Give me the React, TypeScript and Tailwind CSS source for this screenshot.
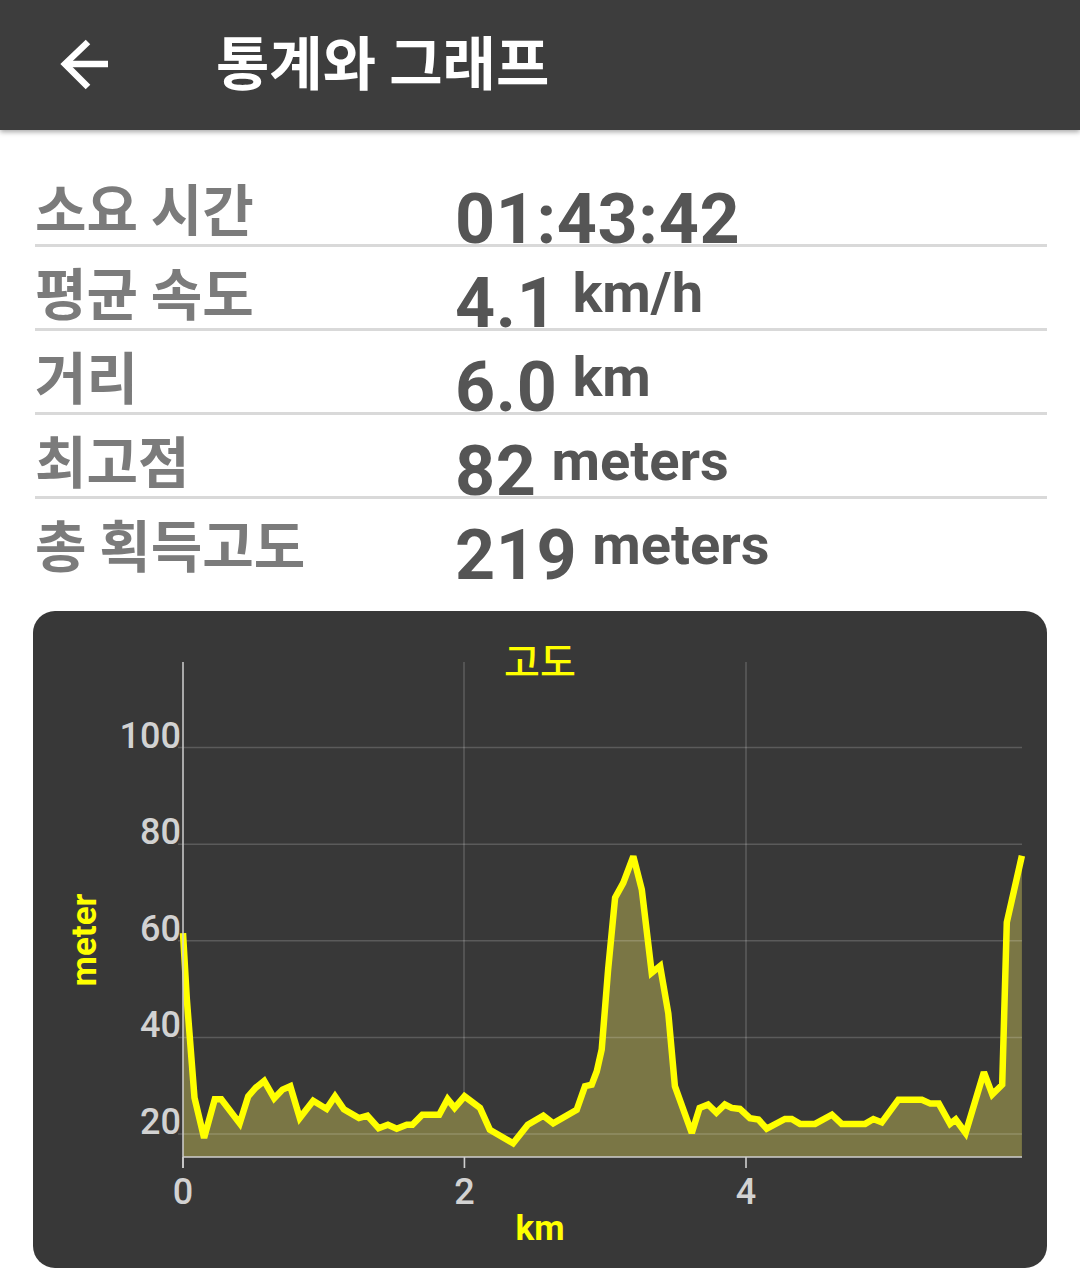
import { ReactNode } from 'react'

const ELEVATION: [number, number][] = [
  [0, 61.6], [0.027, 48], [0.082, 27.5], [0.15, 19.2], [0.226, 27.2], [0.272, 27.2],
  [0.403, 22.2], [0.463, 27.8], [0.517, 29.6], [0.577, 31.0], [0.648, 27.4], [0.707, 29.2],
  [0.762, 29.9], [0.83, 23.3], [0.925, 26.9], [1.02, 25.2], [1.08, 27.8], [1.143, 25.1],
  [1.25, 23.3], [1.31, 23.8], [1.39, 21.2], [1.456, 21.9], [1.518, 21.1], [1.59, 21.9],
  [1.63, 21.9], [1.7, 24.0], [1.82, 24.0], [1.88, 27.2], [1.93, 25.4], [2.0, 27.8],
  [2.11, 25.4], [2.18, 20.9], [2.345, 18.1], [2.45, 21.9], [2.56, 23.8], [2.63, 22.2],
  [2.797, 25.0], [2.856, 29.9], [2.904, 30.2], [2.94, 33.0], [2.975, 37.5], [3.02, 54.0],
  [3.07, 68.9], [3.128, 72.0], [3.199, 77.5], [3.26, 70.6], [3.33, 53.4], [3.39, 54.8],
  [3.448, 45.0], [3.495, 29.9], [3.615, 20.2], [3.67, 25.4], [3.73, 26.1], [3.79, 24.4],
  [3.85, 26.1], [3.898, 25.4], [3.957, 25.2], [4.028, 23.3], [4.088, 23.0], [4.147, 21.1],
  [4.277, 23.1], [4.325, 23.1], [4.384, 22.1], [4.49, 22.1], [4.61, 24.0], [4.68, 22.1],
  [4.846, 22.1], [4.905, 23.1], [4.965, 22.4], [5.083, 27.1], [5.25, 27.1], [5.31, 26.3],
  [5.37, 26.3], [5.45, 22.1], [5.49, 23.0], [5.56, 20.2], [5.69, 32.8], [5.75, 28.2],
  [5.82, 30.2], [5.853, 63.8], [5.96, 77.6],
]

// 차트 좌표 (페이지 픽셀 기준)
const px = (km: number) => 183 + km * 140.75
const py = (m: number) => 1134 - (m - 20) * 4.83
const BASE_Y = 1157

function StatRow({ label, value, unit, last }: { label: string; value: string; unit?: string; last?: boolean }) {
  return (
    <div className={last ? 'flex h-[84px]' : 'flex h-[84px] border-b-[3px] border-[#d9d9d9]'}>
      <div className="w-[420px] pt-[16px] font-['Noto_Sans_CJK_KR',sans-serif] text-[56px] font-bold leading-none text-[#7b7b7b]">
        {label}
      </div>
      <div className="flex items-start font-['Roboto',sans-serif] font-bold text-[#555555]">
        <span className="pt-[21px] text-[70px] leading-none tracking-[0.6px]">{value}</span>
        {unit && <span className="ml-[15px] pt-[18px] text-[56px] leading-none">{unit}</span>}
      </div>
    </div>
  )
}

function ElevationChart() {
  const pts = ELEVATION.map(([k, m]) => `${px(k).toFixed(1)},${py(m).toFixed(1)}`).join(' ')
  const lastX = px(ELEVATION[ELEVATION.length - 1][0]).toFixed(1)
  const area = `183,${BASE_Y} ${pts} ${lastX},${BASE_Y}`
  const yTicks = [20, 40, 60, 80, 100]
  const xTicks = [0, 2, 4]

  return (
    <svg width="1014" height="657" viewBox="33 611 1014 657" className="block">
      <text x="540" y="676" textAnchor="middle" fontSize="39" fontWeight="500" fill="#ffff00" fontFamily="'Noto Sans CJK KR', sans-serif">
        고도
      </text>

      {/* 세로 격자 */}
      {[464, 746].map((x) => (
        <line key={x} x1={x} y1={662} x2={x} y2={1168} stroke="#5c5c5c" strokeWidth="1.5" />
      ))}

      <polygon points={area} fill="#7a7645" />

      {/* 가로 격자 */}
      {yTicks.map((v) => (
        <g key={v}>
          <line x1={178} y1={py(v)} x2={1022} y2={py(v)} stroke="rgba(255,255,255,0.18)" strokeWidth="1.5" />
          <text x="181" y={py(v)} textAnchor="end" fontSize="36" fontWeight="500" fill="#d2d2d2" fontFamily="Roboto, sans-serif">
            {v}
          </text>
        </g>
      ))}

      <polyline points={pts} fill="none" stroke="#ffff00" strokeWidth="6.5" strokeLinejoin="miter" strokeMiterlimit="3" />

      {/* 축 */}
      <line x1={183} y1={662} x2={183} y2={1168} stroke="#cfcfcf" strokeWidth="1.5" />
      <line x1={183} y1={BASE_Y} x2={1022} y2={BASE_Y} stroke="#cfcfcf" strokeWidth="1.5" />
      {xTicks.map((k) => (
        <g key={k}>
          <line x1={px(k)} y1={BASE_Y} x2={px(k)} y2={1168} stroke="#cfcfcf" strokeWidth="1.5" />
          <text x={px(k)} y="1204" textAnchor="middle" fontSize="36" fontWeight="500" fill="#d2d2d2" fontFamily="Roboto, sans-serif">
            {k}
          </text>
        </g>
      ))}

      <text x="540" y="1240" textAnchor="middle" fontSize="35" fontWeight="700" fill="#ffff00" fontFamily="Roboto, sans-serif">
        km
      </text>
      <text
        x="0"
        y="0"
        transform="translate(96 940) rotate(-90)"
        textAnchor="middle"
        fontSize="35"
        fontWeight="700"
        fill="#ffff00"
        fontFamily="Roboto, sans-serif"
      >
        meter
      </text>
    </svg>
  )
}

function Header({ children }: { children: ReactNode }) {
  return (
    <div className="relative z-10 flex h-[130px] items-center bg-[#3d3d3d] shadow-[0_2px_5px_rgba(0,0,0,0.35)]">
      <svg width="60" height="60" viewBox="0 0 60 60" className="ml-[55px] shrink-0">
        <path d="M10 29H53" stroke="#ffffff" strokeWidth="6.5" fill="none" />
        <path d="M33 7L10 29L33 52" stroke="#ffffff" strokeWidth="6.5" fill="none" strokeLinejoin="miter" />
      </svg>
      <h1 className="ml-[101px] pb-[10px] font-['Noto_Sans_CJK_KR',sans-serif] text-[58px] font-bold leading-none text-white">
        {children}
      </h1>
    </div>
  )
}

export default function App() {
  return (
    <div className="h-[1269px] w-[1080px] overflow-hidden bg-white">
      <Header>통계와 그래프</Header>

      <div className="mt-[33px] pl-[35px] pr-[33px]">
        <StatRow label="소요 시간" value="01:43:42" />
        <StatRow label="평균 속도" value="4.1" unit="km/h" />
        <StatRow label="거리" value="6.0" unit="km" />
        <StatRow label="최고점" value="82" unit="meters" />
        <StatRow label="총 획득고도" value="219" unit="meters" last />
      </div>

      <div className="ml-[33px] mt-[28px] w-[1014px] overflow-hidden rounded-[22px] bg-[#383838]">
        <ElevationChart />
      </div>
    </div>
  )
}
